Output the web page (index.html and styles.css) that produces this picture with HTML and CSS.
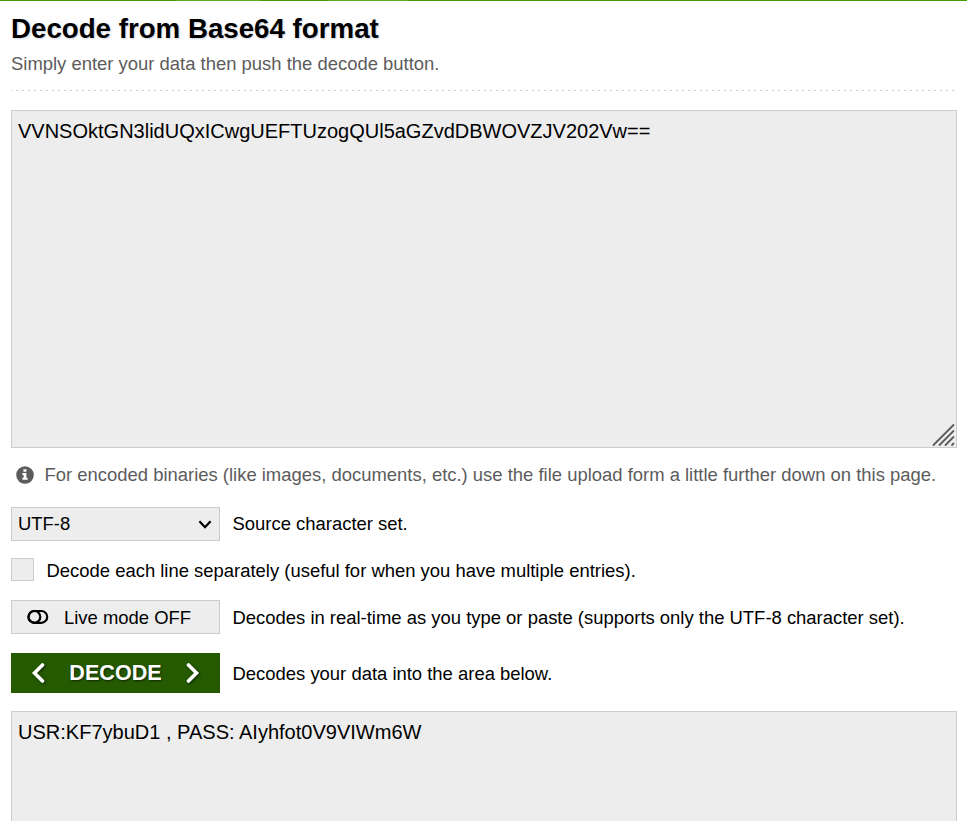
FILE: index.html
```html
<!DOCTYPE html>
<html lang="en">
<head>
<meta charset="utf-8">
<title>Decode from Base64 format</title>
<link rel="stylesheet" href="styles.css">
</head>
<body>
<div class="topbar"></div>
<main>
  <h1>Decode from Base64 format</h1>
  <p class="lead">Simply enter your data then push the decode button.</p>
  <div class="rule"></div>
  <div class="area input"><span>VVNSOktGN3lidUQxICwgUEFTUzogQUl5aGZvdDBWOVZJV202Vw==</span>
    <svg class="grip" width="24" height="24" viewBox="0 0 24 24"><path d="M2.5 22L22.5 2M8.5 22L22.5 8M14.5 22L22.5 14M21 22L22.5 20.5"/></svg>
  </div>
  <p class="hint"><svg width="18" height="18" viewBox="0 0 18 18"><circle cx="9" cy="9" r="8.8" fill="#5c5c5c"/><path fill="#fff" d="M7.4 3.2h3v2.6h-3zM6.4 7h4v4.8h1.2v2H6.4v-2h1.2V9H6.4z"/></svg><span>For encoded binaries (like images, documents, etc.) use the file upload form a little further down on this page.</span></p>
  <div class="row charset"><div class="control select"><span>UTF-8</span><svg width="14" height="10" viewBox="0 0 14 10"><path d="M1.4 2.2L7 8.2L12.6 2.2"/></svg></div><span class="label">Source character set.</span></div>
  <div class="row lines"><div class="box"></div><span class="label">Decode each line separately (useful for when you have multiple entries).</span></div>
  <div class="row live"><div class="control toggle"><svg width="22" height="16" viewBox="0 0 22 16"><rect x="1.5" y="2" width="18.7" height="11.8" rx="5.9"/><circle cx="7.4" cy="7.9" r="5.9"/></svg><span>Live mode OFF</span></div><span class="label">Decodes in real-time as you type or paste (supports only the UTF-8 character set).</span></div>
  <div class="row submit"><div class="decode"><svg width="14" height="20" viewBox="0 0 14 20"><path d="M11.5 2L3.5 10L11.5 18"/></svg><span>DECODE</span><svg width="14" height="20" viewBox="0 0 14 20"><path d="M2.5 2L10.5 10L2.5 18"/></svg></div><span class="label">Decodes your data into the area below.</span></div>
  <div class="area output"><span>USR:KF7ybuD1 , PASS: AIyhfot0V9VIWm6W</span></div>
</main>
</body>
</html>
```

FILE: styles.css
```css
* { box-sizing: border-box; }
html, body { height: 821px; overflow: hidden; }
body { margin: 0; background: #fff; color: #000; font-family: "Liberation Sans", Arial, sans-serif; font-size: 18px; }
.topbar { height: 1px; background: linear-gradient(90deg, #459a00 0 176px, #5fab25 177px 260px, #459a00 261px 328px, #5fab25 329px 408px, #459a00 409px); }
main { padding: 0 10px 0 11px; }
h1 { margin: 0; padding-top: 12px; height: 47px; font-size: 27.7px; line-height: 32px; text-shadow: 1px 1px 2px #cbd1dc; white-space: nowrap; }
p { margin: 0; color: #5c5c5c; white-space: nowrap; }
.lead { height: 42px; padding-top: 5px; line-height: 22px; font-size: 18.45px; }
.rule { height: 1px; background: repeating-linear-gradient(90deg, #ccc 0 1px, transparent 1px 5px, #ccc 5px 6px); }
.area { position: relative; border: 1px solid #ccc; background: #ededed; padding: 8px 6px; font-size: 20px; line-height: 24px; }
.input { height: 338px; margin-top: 19px; }
.output { height: 112px; margin-top: 18px; border-bottom: 0; font-size: 20.03px; }
.grip { position: absolute; right: 1px; bottom: 0; fill: none; stroke: #5c5c5c; stroke-width: 1.8; stroke-linecap: round; }
.hint { display: flex; align-items: center; height: 22px; margin-top: 16px; padding-left: 5px; font-size: 18.46px; }
.hint svg { margin: -1px 0 0 -0.5px; }
.hint span { margin-left: 11px; }
.row { display: flex; align-items: center; white-space: nowrap; font-size: 18.46px; }
.control { display: flex; align-items: center; width: 209px; height: 34px; border: 1px solid #ccc; background: #ededed; }
.label { margin-left: 12.5px; }
.charset { margin-top: 21px; }
.select { justify-content: space-between; padding: 0 7px 0 6px; }
.select svg { fill: none; stroke: #000; stroke-width: 2.2; }
.lines { height: 23px; margin-top: 17px; }
.lines .label { margin-left: 12.5px; padding-top: 3px; }
.box { width: 23px; height: 23px; border: 1px solid #ccc; background: #ededed; }
.live { margin-top: 19px; }
.live .label { padding-top: 1px; }
.toggle { padding-left: 15px; }
.toggle span { margin-left: 15px; padding-top: 1px; }
.toggle svg { fill: none; stroke: #000; stroke-width: 2.2; }
.submit { margin-top: 19px; }
.submit .label { padding-top: 2px; }
.decode { display: flex; align-items: center; justify-content: space-between; width: 209px; height: 40px; padding: 0 20px; background: #255a00; color: #fff; font-size: 21.6px; font-weight: bold; text-shadow: 1px 1px 2px #102800; }
.decode svg { fill: none; stroke: #fff; stroke-width: 3.6; stroke-linecap: round; filter: drop-shadow(1px 1px 1px #102800); }
```
